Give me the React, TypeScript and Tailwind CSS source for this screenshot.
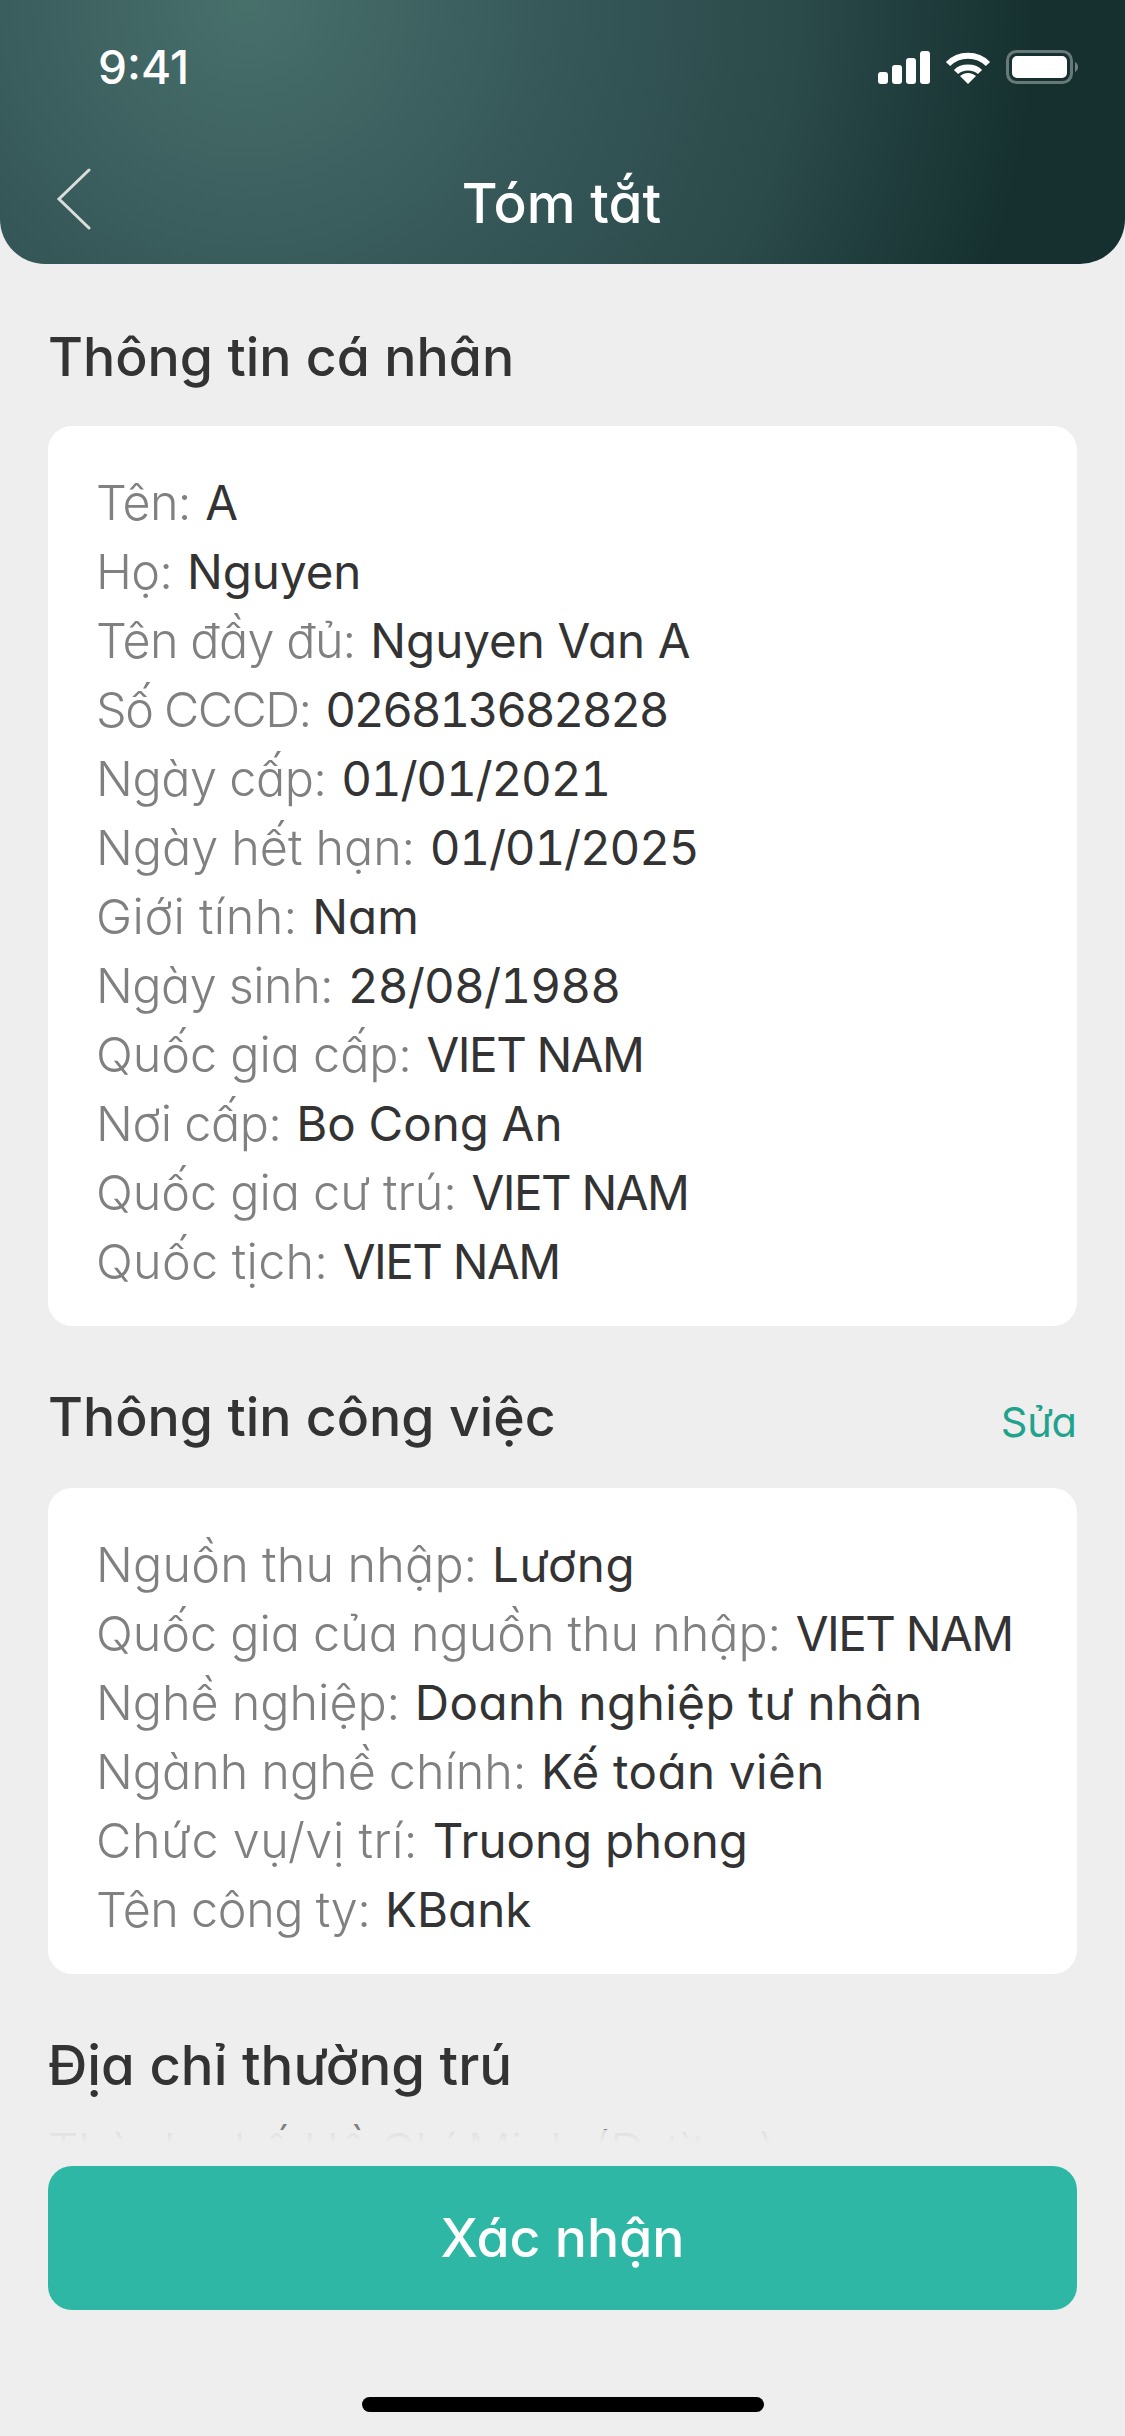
import React from 'react';

type Row = { label: string; value: string; labelClass?: string; valueClass?: string };

const caps = 'tracking-[-1.5px]';
const date = 'tracking-[-1.2px]';

const personal: Row[] = [
    { label: 'Tên:', value: 'A', labelClass: 'tracking-[-0.6px]' },
    { label: 'Họ:', value: 'Nguyen', labelClass: 'tracking-[-0.6px]' },
    { label: 'Tên đầy đủ:', value: 'Nguyen Van A', labelClass: 'tracking-[-0.6px]' },
    { label: 'Số CCCD:', value: '026813682828', labelClass: caps, valueClass: 'tracking-[-2.3px]' },
    { label: 'Ngày cấp:', value: '01/01/2021', valueClass: date, labelClass: 'tracking-[-0.4px]' },
    { label: 'Ngày hết hạn:', value: '01/01/2025', valueClass: date },
    { label: 'Giới tính:', value: 'Nam', labelClass: 'tracking-[0.5px]' },
    { label: 'Ngày sinh:', value: '28/08/1988', valueClass: 'tracking-[-0.8px]', labelClass: 'tracking-[-0.5px]' },
    { label: 'Quốc gia cấp:', value: 'VIET NAM', valueClass: caps },
    { label: 'Nơi cấp:', value: 'Bo Cong An', labelClass: 'tracking-[-0.4px]' },
    { label: 'Quốc gia cư trú:', value: 'VIET NAM', valueClass: caps },
    { label: 'Quốc tịch:', value: 'VIET NAM', valueClass: caps, labelClass: 'tracking-[0.3px]' },
];

const job: Row[] = [
    { label: 'Nguồn thu nhập:', value: 'Lương', labelClass: 'tracking-[0.2px]', valueClass: 'tracking-[0.6px]' },
    { label: 'Quốc gia của nguồn thu nhập:', value: 'VIET NAM', valueClass: caps },
    { label: 'Nghề nghiệp:', value: 'Doanh nghiệp tư nhân', valueClass: 'tracking-[0.5px]' },
    { label: 'Ngành nghề chính:', value: 'Kế toán viên', valueClass: 'tracking-[0.5px]' },
    { label: 'Chức vụ/vị trí:', value: 'Truong phong', labelClass: 'tracking-[0.6px]' },
    { label: 'Tên công ty:', value: 'KBank', labelClass: 'tracking-[-0.4px]' },
];

function InfoCard({ rows }: { rows: Row[] }) {
    return (
        <div className="bg-white rounded-[24px] pl-[48px] pr-[24px] pt-[42px] pb-[30px]">
            {rows.map(r => (
                <div key={r.label} className="h-[69px] leading-[69px] whitespace-nowrap">
                    <span className={`text-[48.5px] text-[#808080] font-light ${r.labelClass ?? ''}`}>{r.label}</span>
                    <span className={`text-[47.5px] text-[#333333] ml-[15px] ${r.valueClass ?? ''}`}>{r.value}</span>
                </div>
            ))}
        </div>
    );
}

function StatusIcons() {
    return (
        <div className="flex items-center gap-[15px]">
            <svg width="52" height="33" viewBox="0 0 52 33" fill="white">
                <rect x="0" y="21" width="10" height="12" rx="3" />
                <rect x="14" y="14" width="10" height="19" rx="3" />
                <rect x="28" y="7" width="10" height="26" rx="3" />
                <rect x="42" y="0" width="10" height="33" rx="3" />
            </svg>
            <svg width="46" height="33" viewBox="0 0 46 33" fill="none" stroke="white" strokeWidth="6">
                <path d="M3 13 C14 2 32 2 43 13" />
                <path d="M11 21 C17 15 29 15 35 21" />
                <path d="M15 25 L23 33 L31 25 C26 21 20 21 15 25 Z" fill="white" stroke="none" />
            </svg>
            <svg width="72" height="34" viewBox="0 0 72 34" fill="none">
                <rect x="1.5" y="1.5" width="64" height="31" rx="9" stroke="white" strokeOpacity="0.35" strokeWidth="3" />
                <rect x="6" y="6" width="55" height="22" rx="5" fill="white" />
                <path d="M69 12 C71 13 72 15 72 17 C72 19 71 21 69 22 Z" fill="white" fillOpacity="0.4" />
            </svg>
        </div>
    );
}

export default function App() {
    return (
        <div className="relative w-[1125px] h-[2436px] bg-[#eeeeee] overflow-hidden font-['Inter',sans-serif] [font-feature-settings:'cv11','tnum']">
            <header className="h-[264px] rounded-b-[45px] bg-[radial-gradient(circle_at_22%_0%,#48706b_0%,#37595a_32%,#2b4a4a_60%,#15302f_86%)] text-white">
                <div className="flex items-center justify-between h-[134px] pl-[98px] pr-[47px]">
                    <span className="text-[46px] font-medium [font-feature-settings:'cv11']">9:41</span>
                    <StatusIcons />
                </div>
                <div className="relative mt-[35px] flex items-center justify-center h-[68px]">
                    <svg className="absolute left-[56px] top-[-1px]" width="36" height="62" viewBox="0 0 36 62" fill="none" stroke="#d9dedc" strokeWidth="3" strokeLinecap="round">
                        <path d="M33 2 L3 31 L33 60" />
                    </svg>
                    <h1 className="text-[55px] font-medium pr-[2px]">Tóm tắt</h1>
                </div>
            </header>

            <main className="px-[48px]">
                <h2 className="mt-[60px] h-[66px] leading-[66px] text-[53.6px] font-medium text-[#333333]">Thông tin cá nhân</h2>
                <div className="mt-[36px]">
                    <InfoCard rows={personal} />
                </div>

                <div className="mt-[58px] flex items-center justify-between h-[66px]">
                    <h2 className="text-[53.6px] font-medium text-[#333333]">Thông tin công việc</h2>
                    <span className="pt-[10px] text-[41.5px] text-[#1fa38c]">Sửa</span>
                </div>
                <div className="mt-[38px]">
                    <InfoCard rows={job} />
                </div>

                <h2 className="mt-[58px] h-[66px] leading-[66px] text-[54.5px] font-medium text-[#333333]">Địa chỉ thường trú</h2>
                <div className="mt-[18px] h-[69px] leading-[69px] text-[48px] text-[#808080] font-light whitespace-nowrap">
                    Thành phố Hồ Chí Minh (Đường)
                </div>
            </main>

            {/* bottom action bar sits over the scrolling content */}
            <div className="absolute left-0 right-0 bottom-0 h-[306px] px-[48px] bg-[linear-gradient(to_bottom,rgba(238,238,238,0.85)_0px,#eeeeee_14px)]">
                <button className="mt-[36px] w-full h-[144px] rounded-[24px] bg-[#2eb7a4] text-white text-[53.5px] font-medium">Xác nhận</button>
                <div className="mt-[87px] mx-auto w-[402px] h-[15px] rounded-full bg-black" />
            </div>
        </div>
    );
}
